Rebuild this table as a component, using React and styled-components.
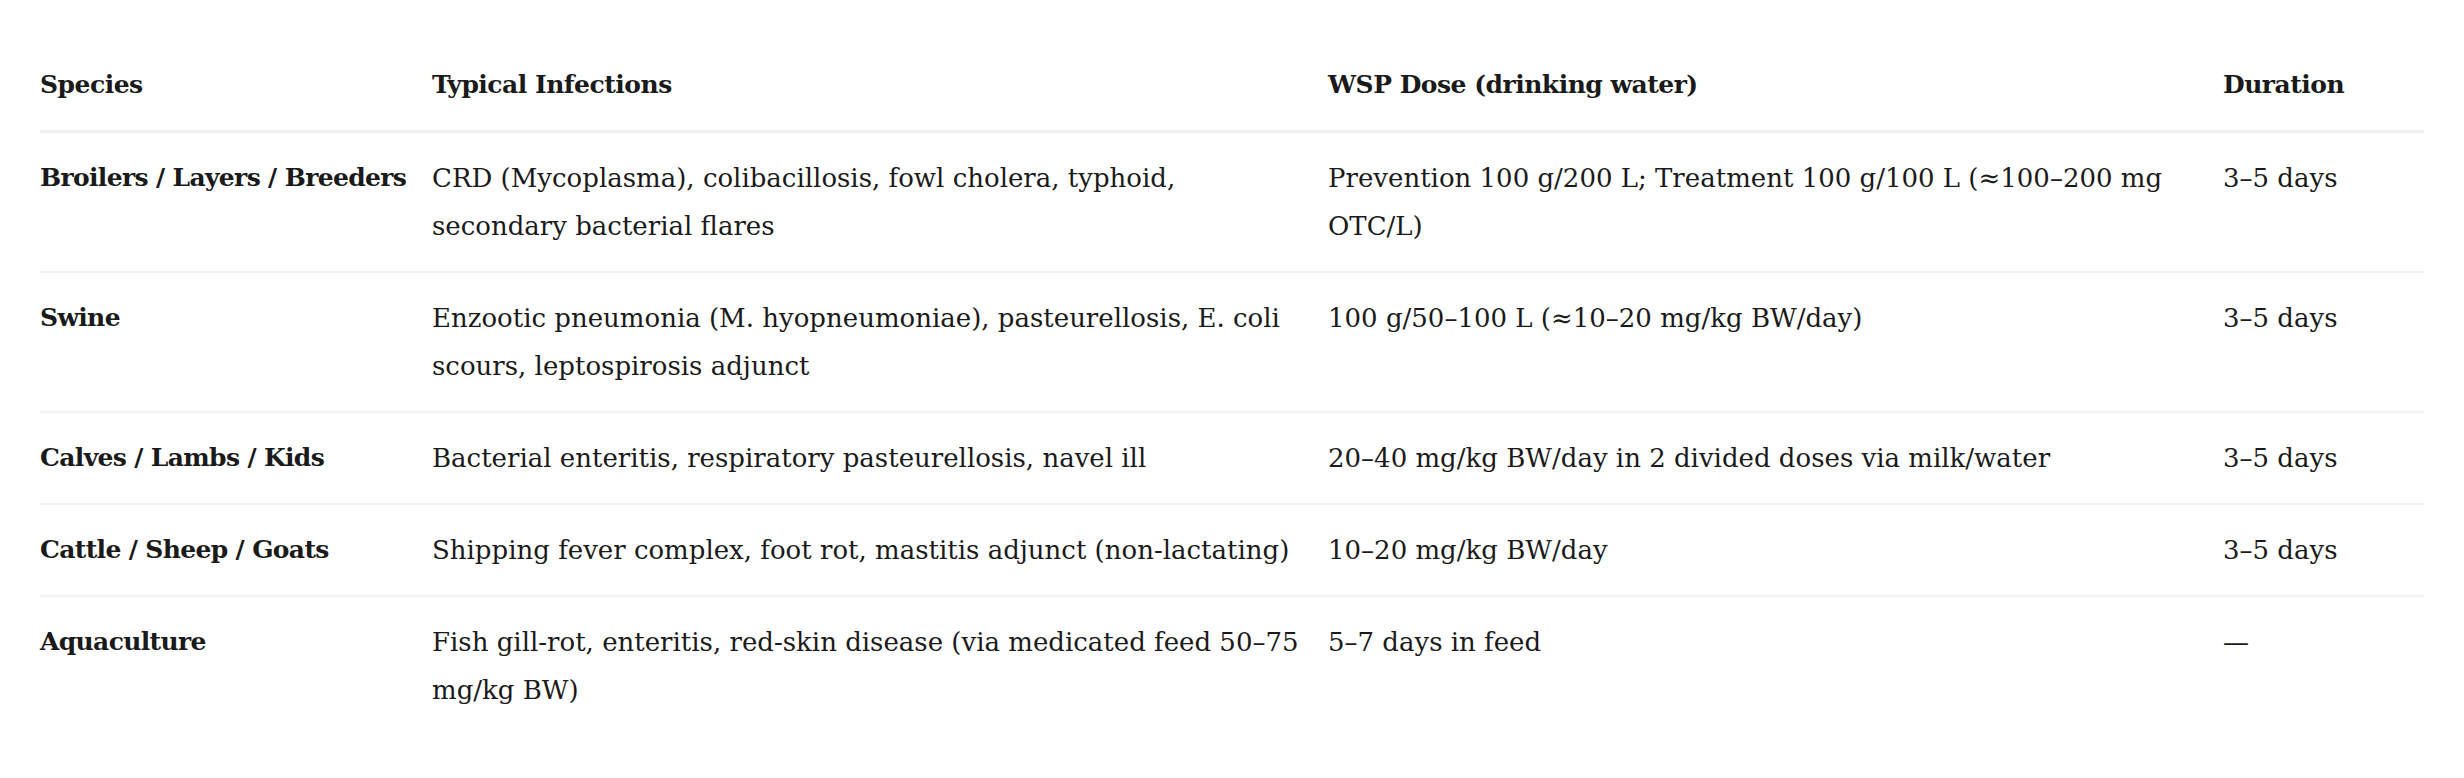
import React from "react";
import styled, { createGlobalStyle } from "styled-components";

const Global = createGlobalStyle`
  html, body { margin: 0; padding: 0; background: #ffffff; }
  body { font-family: "DejaVu Serif", "Liberation Serif", serif; color: #1a1a1a; }
`;

const Page = styled.div`
  padding: 40px;
`;

const Table = styled.table`
  width: 100%;
  border-collapse: collapse;
  table-layout: fixed;
  font-size: 26px;
  line-height: 48px;
`;

const Col = styled.col`
  width: ${(p) => p.$w}px;
`;

const HeadCell = styled.th`
  text-align: left;
  font-weight: 700;
  font-size: 25px;
  letter-spacing: -0.5px;
  padding: 21px 20px 21px 0;
  vertical-align: top;
  border-bottom: 3px solid #efefef;
`;

const Row = styled.tr`
  border-bottom: 2px solid #f1f1f1;
  &:last-child { border-bottom: none; }
`;

const Cell = styled.td`
  padding: 21px 20px 21px 0;
  vertical-align: top;
  font-weight: ${(p) => (p.$strong ? 700 : 400)};
  font-size: ${(p) => (p.$strong ? "25px" : "26px")};
  letter-spacing: ${(p) => (p.$strong ? "-0.65px" : "0")};
`;

const rows = [
  {
    species: "Broilers / Layers / Breeders",
    infections: "CRD (Mycoplasma), colibacillosis, fowl cholera, typhoid, secondary bacterial flares",
    dose: "Prevention 100 g/200 L; Treatment 100 g/100 L (≈100–200 mg OTC/L)",
    duration: "3–5 days",
  },
  {
    species: "Swine",
    infections: "Enzootic pneumonia (M. hyopneumoniae), pasteurellosis, E. coli scours, leptospirosis adjunct",
    dose: "100 g/50–100 L (≈10–20 mg/kg BW/day)",
    duration: "3–5 days",
  },
  {
    species: "Calves / Lambs / Kids",
    infections: "Bacterial enteritis, respiratory pasteurellosis, navel ill",
    dose: "20–40 mg/kg BW/day in 2 divided doses via milk/water",
    duration: "3–5 days",
  },
  {
    species: "Cattle / Sheep / Goats",
    infections: "Shipping fever complex, foot rot, mastitis adjunct (non-lactating)",
    dose: "10–20 mg/kg BW/day",
    duration: "3–5 days",
  },
  {
    species: "Aquaculture",
    infections: "Fish gill-rot, enteritis, red-skin disease (via medicated feed 50–75 mg/kg BW)",
    dose: "5–7 days in feed",
    duration: "—",
  },
];

export default function App() {
  return (
    <>
      <Global />
      <Page>
        <Table>
          <colgroup>
            <Col $w={392} />
            <Col $w={896} />
            <Col $w={895} />
            <Col $w={201} />
          </colgroup>
          <thead>
            <tr>
              <HeadCell>Species</HeadCell>
              <HeadCell>Typical Infections</HeadCell>
              <HeadCell>WSP Dose (drinking water)</HeadCell>
              <HeadCell>Duration</HeadCell>
            </tr>
          </thead>
          <tbody>
            {rows.map((r) => (
              <Row key={r.species}>
                <Cell $strong>{r.species}</Cell>
                <Cell>{r.infections}</Cell>
                <Cell>{r.dose}</Cell>
                <Cell>{r.duration}</Cell>
              </Row>
            ))}
          </tbody>
        </Table>
      </Page>
    </>
  );
}
